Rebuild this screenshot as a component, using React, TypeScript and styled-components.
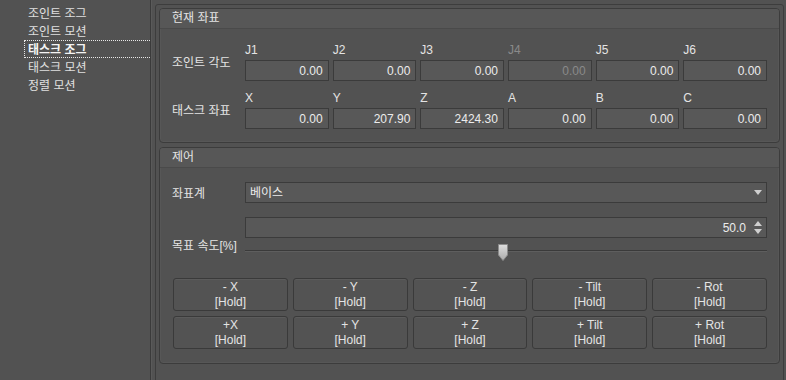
import React from 'react';
import styled, { createGlobalStyle } from 'styled-components';

const GlobalStyle = createGlobalStyle`
  html, body {
    margin: 0;
    padding: 0;
    background: #525252;
  }
  body {
    font-family: "Liberation Sans", "Noto Sans CJK KR", sans-serif;
    font-size: 12px;
    color: #e4e4e4;
  }
`;

const Screen = styled.div`
  display: flex;
  width: 786px;
  height: 380px;
  overflow: hidden;
  background: #525252;
`;

const Sidebar = styled.ul`
  list-style: none;
  margin: 0;
  padding: 4px 0 0 24px;
  width: 126px;
  flex: none;
  border-right: 1px solid #3b3b3b;
  box-shadow: 1px 0 0 #5a5a5a;
`;

const NavItem = styled.li<{ $active?: boolean }>`
  height: 18px;
  line-height: 18px;
  padding-left: 3px;
  box-sizing: border-box;
  border: 1px dotted ${(p) => (p.$active ? '#e8e8e8' : 'transparent')};
  border-right: none;
  font-weight: ${(p) => (p.$active ? 700 : 400)};
  color: ${(p) => (p.$active ? '#f4f4f4' : '#e0e0e0')};
  white-space: nowrap;
`;

const Frame = styled.div`
  flex: 1;
  margin: 4px 2px 0 4px;
  height: 400px;
  padding: 3px;
  border: 1px solid #3d3d3d;
  border-radius: 3px;
  display: flex;
  flex-direction: column;
  gap: 4px;
`;

const Group = styled.section`
  border: 1px solid #3c3c3c;
  border-radius: 4px;
  box-shadow: inset 0 0 0 1px #575757;
  overflow: hidden;
`;

const GroupHeader = styled.div`
  height: 19px;
  line-height: 18px;
  padding-left: 12px;
  background: #575757;
  border-bottom: 1px solid #4a4a4a;
  color: #e4e4e4;
`;

const GroupBody = styled.div<{ $pt: number; $pb: number }>`
  padding: ${(p) => p.$pt}px 12px ${(p) => p.$pb}px 12px;
  display: flex;
  flex-direction: column;
`;

const CoordRow = styled.div`
  display: grid;
  grid-template-columns: 73px 1fr;
  align-items: center;
  & + & {
    margin-top: 8px;
  }
`;

const RowLabel = styled.div`
  white-space: nowrap;
`;

const Cells = styled.div`
  display: grid;
  grid-template-columns: repeat(6, 1fr);
  column-gap: 4px;
`;

const Cell = styled.div`
  display: flex;
  flex-direction: column;
`;

const CellLabel = styled.div<{ $disabled?: boolean }>`
  height: 19px;
  line-height: 19px;
  color: ${(p) => (p.$disabled ? '#8a8a8a' : '#e4e4e4')};
`;

const ValueBox = styled.div<{ $disabled?: boolean }>`
  height: 21px;
  box-sizing: border-box;
  border: 1px solid #3b3b3b;
  background: #585858;
  text-align: right;
  padding-right: 5px;
  line-height: 20px;
  color: ${(p) => (p.$disabled ? '#8a8a8a' : '#ececec')};
`;

const FieldRow = styled.div`
  display: grid;
  grid-template-columns: 73px 1fr;
  align-items: center;
`;

const SpeedRow = styled.div`
  display: grid;
  grid-template-columns: 73px 1fr;
  grid-template-rows: 21px 18px;
  row-gap: 6px;
  margin-top: 14px;
`;

const SpeedLabel = styled(RowLabel)`
  grid-row: 1 / span 2;
  align-self: end;
  margin-bottom: 9px;
`;

const Combo = styled.div`
  position: relative;
  height: 21px;
  box-sizing: border-box;
  border: 1px solid #3b3b3b;
  background: #585858;
  line-height: 20px;
  padding-left: 4px;
  color: #ececec;
`;

const ArrowSlot = styled.div`
  position: absolute;
  right: 4px;
  top: 0;
  bottom: 0;
  width: 9px;
  display: flex;
  flex-direction: column;
  justify-content: center;
  align-items: center;
  gap: 3px;
`;

const Spin = styled(Combo)`
  text-align: right;
  padding: 0 20px 0 0;
`;

const Slider = styled.div`
  position: relative;
  height: 18px;
`;

const Groove = styled.div`
  position: absolute;
  left: 0;
  right: 0;
  top: 6px;
  height: 1px;
  background: #3a3a3a;
  border-bottom: 1px solid #5e5e5e;
`;

const Handle = styled.svg`
  position: absolute;
  top: 0;
  margin-left: -5px;
`;

const Buttons = styled.div`
  display: grid;
  grid-template-columns: repeat(5, 1fr);
  grid-auto-rows: 33px;
  gap: 5px;
  margin-top: 16px;
  margin-left: 1px;
`;

const JogButton = styled.button`
  font: inherit;
  color: #e4e4e4;
  background: #535353;
  border: 1px solid #3a3a3a;
  border-radius: 3px;
  box-shadow: inset 0 1px 0 #5b5b5b;
  padding: 0;
  line-height: 15px;
  display: flex;
  flex-direction: column;
  justify-content: center;
  align-items: center;
`;

const Tri = ({ up }: { up?: boolean }) => (
  <svg width="8" height="5" viewBox="0 0 8 5">
    <polygon points={up ? '0,5 8,5 4,0' : '0,0 8,0 4,5'} fill="#cfcfcf" />
  </svg>
);

const joints = [
  { k: 'J1', v: '0.00' },
  { k: 'J2', v: '0.00' },
  { k: 'J3', v: '0.00' },
  { k: 'J4', v: '0.00', disabled: true },
  { k: 'J5', v: '0.00' },
  { k: 'J6', v: '0.00' },
];

const task = [
  { k: 'X', v: '0.00' },
  { k: 'Y', v: '207.90' },
  { k: 'Z', v: '2424.30' },
  { k: 'A', v: '0.00' },
  { k: 'B', v: '0.00' },
  { k: 'C', v: '0.00' },
];

const buttons = [
  '- X', '- Y', '- Z', '- Tilt', '- Rot',
  '+X', '+ Y', '+ Z', '+ Tilt', '+ Rot',
];

const nav = ['조인트 조그', '조인트 모션', '태스크 조그', '태스크 모션', '정렬 모션'];

const speed = 50;

export default function App() {
  return (
    <>
      <GlobalStyle />
      <Screen>
        <Sidebar>
          {nav.map((n) => (
            <NavItem key={n} $active={n === '태스크 조그'}>
              {n}
            </NavItem>
          ))}
        </Sidebar>
        <Frame>
          <Group>
            <GroupHeader>현재 좌표</GroupHeader>
            <GroupBody $pt={12} $pb={13}>
              <CoordRow>
                <RowLabel>조인트 각도</RowLabel>
                <Cells>
                  {joints.map((j) => (
                    <Cell key={j.k}>
                      <CellLabel $disabled={j.disabled}>{j.k}</CellLabel>
                      <ValueBox $disabled={j.disabled}>{j.v}</ValueBox>
                    </Cell>
                  ))}
                </Cells>
              </CoordRow>
              <CoordRow>
                <RowLabel>태스크 좌표</RowLabel>
                <Cells>
                  {task.map((j) => (
                    <Cell key={j.k}>
                      <CellLabel>{j.k}</CellLabel>
                      <ValueBox>{j.v}</ValueBox>
                    </Cell>
                  ))}
                </Cells>
              </CoordRow>
            </GroupBody>
          </Group>
          <Group>
            <GroupHeader>제어</GroupHeader>
            <GroupBody $pt={14} $pb={14}>
              <FieldRow>
                <RowLabel>좌표계</RowLabel>
                <Combo>
                  베이스
                  <ArrowSlot>
                    <Tri />
                  </ArrowSlot>
                </Combo>
              </FieldRow>
              <SpeedRow>
                <SpeedLabel>목표 속도[%]</SpeedLabel>
                <Spin>
                  {speed.toFixed(1)}
                  <ArrowSlot>
                    <Tri up />
                    <Tri />
                  </ArrowSlot>
                </Spin>
                <Slider>
                  <Groove />
                  <Handle
                    width="10"
                    height="17"
                    viewBox="0 0 10 17"
                    style={{ left: `calc(5px + (100% - 16px) * ${speed / 100})` }}
                  >
                    <defs>
                      <linearGradient id="hg" x1="0" y1="0" x2="0" y2="1">
                        <stop offset="0" stopColor="#dedede" />
                        <stop offset="1" stopColor="#a9a9a9" />
                      </linearGradient>
                    </defs>
                    <polygon points="0.5,0.5 9.5,0.5 9.5,11 5,16.5 0.5,11" fill="url(#hg)" stroke="#8c8c8c" />
                  </Handle>
                </Slider>
              </SpeedRow>
              <Buttons>
                {buttons.map((b) => (
                  <JogButton key={b}>
                    <span>{b}</span>
                    <span>[Hold]</span>
                  </JogButton>
                ))}
              </Buttons>
            </GroupBody>
          </Group>
        </Frame>
      </Screen>
    </>
  );
}
